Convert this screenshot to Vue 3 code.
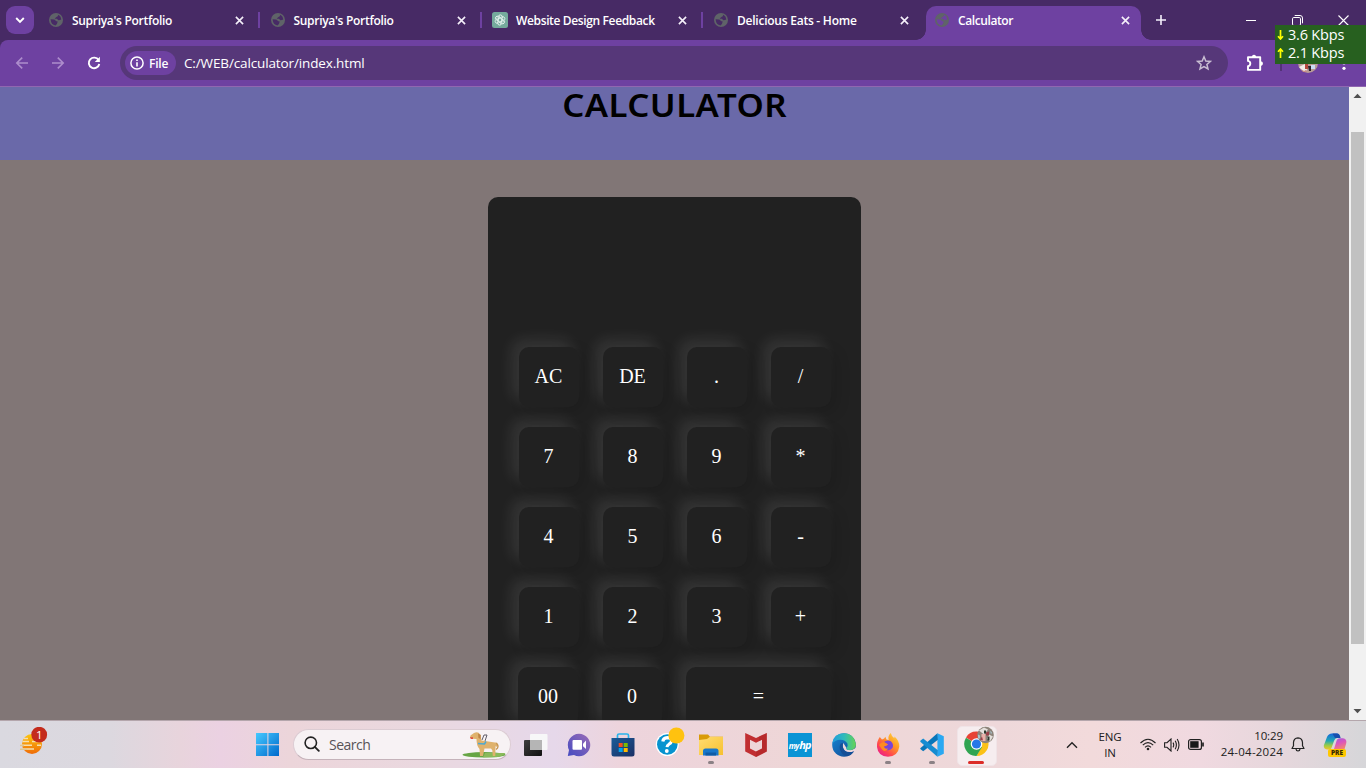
<script setup>
const tabs = [
  { title: "Supriya's Portfolio", icon: 'globe', cls: 't-port' },
  { title: "Supriya's Portfolio", icon: 'globe', cls: 't-port' },
  { title: 'Website Design Feedback', icon: 'gpt', cls: 't-web' },
  { title: 'Delicious Eats - Home', icon: 'globe', cls: 't-eats' },
  { title: 'Calculator', icon: 'globe', cls: 't-calc', active: true },
]
const rows = [
  ['AC', 'DE', '.', '/'],
  ['7', '8', '9', '*'],
  ['4', '5', '6', '-'],
  ['1', '2', '3', '+'],
]
</script>

<template>
  <div class="screen">
    <div class="tabstrip">
      <div class="tabsearch">
        <svg width="10" height="8" viewBox="0 0 10 8"><path d="M1.2 2 L5 5.8 L8.8 2" fill="none" stroke="#fff" stroke-width="1.9" /></svg>
      </div>
      <div class="tabs">
        <div v-for="(t, i) in tabs" :key="i" class="tab" :class="{ active: t.active, sep: i < 3 }">
          <svg v-if="t.icon === 'globe'" class="fav" width="14" height="14" viewBox="0 0 14 14">
            <circle cx="7" cy="7" r="7" fill="#5f6368" />
            <path d="M1.6 6.3 L5 6.4 Q6.8 6.7 6.6 8.1 L8.7 8.4 Q8.4 10.8 6.5 12.4 Q2.1 12 1.6 6.3Z" :fill="t.active ? '#6e41a1' : '#472a65'" />
            <path d="M7.7 1.7 L9.3 2.1 Q9.2 3.8 7.4 3.9 Q6.8 5 5.7 4.9 Q6.2 6 8 5.8 L9.3 7.3 Q10.7 7.5 12.3 6.5 Q12 3.3 9.8 2.1Z" :fill="t.active ? '#6e41a1' : '#472a65'" />
          </svg>
          <svg v-else class="fav gpt" width="16" height="16" viewBox="0 0 16 16">
            <rect width="16" height="16" rx="2.5" fill="#74aa9c" />
            <g fill="none" stroke="#f3faf8" stroke-width=".8">
              <path v-for="k in 6" :key="k" :transform="`rotate(${k * 60} 8 8)`" d="M8 5.9 L10 4.8 Q12.2 4.2 12.8 6.2 Q13.1 7.4 12.1 8.3 M9.8 7 L7.3 5.5 V4" />
            </g>
          </svg>
          <span class="title" :class="t.cls">{{ t.title }}</span>
          <svg class="x" width="9" height="9" viewBox="0 0 9 9"><path d="M.9 .9 L8.1 8.1 M8.1 .9 L.9 8.1" stroke="#f5f0fa" stroke-width="1.6" /></svg>
        </div>
      </div>
      <svg class="plus" width="12" height="12" viewBox="0 0 12 12"><path d="M6 1 V11 M1 6 H11" stroke="#f4effa" stroke-width="1.6" /></svg>
      <div class="winctl">
        <svg width="10" height="10" viewBox="0 0 10 10"><path d="M0 5.5 H10" stroke="#fff" /></svg>
        <svg width="11" height="11" viewBox="0 0 11 11"><g fill="none" stroke="#fff"><rect x=".5" y="2.5" width="8" height="8" rx="1.3" /><path d="M2.7 .5 H8 Q10.5 .5 10.5 3 V8.3" /></g></svg>
        <svg width="11" height="11" viewBox="0 0 11 11"><path d="M.5 .5 L10.5 10.5 M10.5 .5 L.5 10.5" stroke="#fff" stroke-width="1.1" /></svg>
      </div>
    </div>

    <div class="barwrap">
      <div class="toolbar">
        <svg class="back" width="14" height="14" viewBox="0 0 14 14"><path d="M13 7 H2 M7.2 1.6 L1.8 7 L7.2 12.4" fill="none" stroke="#ad8dcc" stroke-width="1.6" /></svg>
        <svg class="fwd" width="14" height="14" viewBox="0 0 14 14"><path d="M1 7 H12 M6.8 1.6 L12.2 7 L6.8 12.4" fill="none" stroke="#ad8dcc" stroke-width="1.6" /></svg>
        <svg class="reload" width="14" height="14" viewBox="0 0 14 14"><path d="M11.6 4.1 A5.3 5.3 0 1 0 12.3 8" fill="none" stroke="#fff" stroke-width="1.9" /><path d="M12.9 .8 V6 H7.8 Z" fill="#fff" /></svg>
        <div class="omni">
          <div class="chip">
            <svg width="14" height="14" viewBox="0 0 14 14"><circle cx="7" cy="7" r="6.1" fill="none" stroke="#fff" stroke-width="1.5" /><path d="M7 6.2 V10.4 M7 3.5 V5" stroke="#fff" stroke-width="1.6" /></svg>
            <span>File</span>
          </div>
          <span class="url">C:/WEB/calculator/index.html</span>
          <svg class="star" width="16" height="16" viewBox="0 0 16 16"><path d="M8 1.8 L9.8 6 L14.4 6.4 L10.9 9.4 L12 13.9 L8 11.5 L4 13.9 L5.1 9.4 L1.6 6.4 L6.2 6 Z" fill="none" stroke="#c8bdd2" stroke-width="1.5" /></svg>
        </div>
        <svg class="puzzle" width="18" height="18" viewBox="0 0 18 18"><path d="M2 3.2 H14.2 V15.9 H2 V12.3 Q4.3 11.8 4.3 9.6 Q4.3 7.3 2 6.9 Z" fill="none" stroke="#fff" stroke-width="1.9" stroke-linejoin="round" /><path d="M5.8 3.4 Q5.8 .7 8 .7 Q10.2 .7 10.2 3.4Z M14 7.2 Q16.9 7.2 16.9 9.5 Q16.9 11.8 14 11.8Z" fill="#fff" /></svg>
        <div class="tsep"></div>
        <svg class="avatar" width="20" height="20" viewBox="0 0 20 20">
          <circle cx="10" cy="10" r="10" fill="#b99b97" />
          <path d="M1 14 L7 11 L9 17 L6 19 Z" fill="#f1ece8" /><path d="M7 11 h3 v5 h-3z" fill="#b4483d" /><path d="M10 13 h3 v5 h-2z" fill="#29222c" /><path d="M13 12 h4 v4 h-4z" fill="#cbdaf5" /><path d="M3 16 l3 2 2 -1 1 2 -4 0z" fill="#c98f86" />
        </svg>
        <svg class="dots" width="4" height="18" viewBox="0 0 4 18"><g fill="#fff"><circle cx="2" cy="4" r="1.6" /><circle cx="2" cy="9" r="1.6" /><circle cx="2" cy="14.3" r="1.6" /></g></svg>
      </div>
    </div>

    <div class="viewport">
      <div class="page">
        <header><h1>CALCULATOR</h1></header>
        <main>
          <div class="calc">
            <div v-for="(r, i) in rows" :key="i" class="row">
              <div v-for="b in r" :key="b" class="key">{{ b }}</div>
            </div>
            <div class="row last">
              <div class="key">00</div>
              <div class="key">0</div>
              <div class="key wide">=</div>
            </div>
          </div>
        </main>
      </div>
      <div class="scroll">
        <svg width="17" height="17" viewBox="0 0 17 17"><path d="M4.5 11 L8.5 6.7 L12.5 11 Z" fill="#505050" /></svg>
        <div class="thumb"></div>
        <svg width="17" height="17" viewBox="0 0 17 17"><path d="M4.5 6 L8.5 10.3 L12.5 6 Z" fill="#505050" /></svg>
      </div>
    </div>

    <div class="taskbar">
      <div class="widget">
        <svg width="29" height="29" viewBox="0 0 29 29">
          <defs><linearGradient id="sun" x1="0" y1="0" x2="0" y2="1"><stop offset="0" stop-color="#fcc60d" /><stop offset="1" stop-color="#ef6b08" /></linearGradient></defs>
          <circle cx="12" cy="17" r="10" fill="url(#sun)" />
          <g stroke="#f5dfb0" stroke-width="1.4"><path d="M4 11.5 H8 M2.5 14.5 H9 M12 14.5 H20 M0 18.2 H12 M17 18.2 H21 M2 22 H14" /></g>
          <g stroke="#dfc693" stroke-width="1.5"><path d="M0 18.5 H4 M0 22.2 H7" /></g>
          <circle cx="19.2" cy="7.7" r="7.9" fill="#c42b1c" />
        </svg>
        <span class="badge">1</span>
      </div>

      <svg class="win" width="24" height="24" viewBox="0 0 24 24">
        <defs><linearGradient id="wg" x1="0" y1="0" x2="1" y2="1"><stop offset="0" stop-color="#45c9ff" /><stop offset="1" stop-color="#0069cc" /></linearGradient></defs>
        <path d="M0 0 H11.4 V11.2 H0Z M12.4 0 H23 V11.2 H12.4Z M0 12.2 H11.4 V23 H0Z M12.4 12.2 H23 V23 H12.4Z" fill="url(#wg)" />
      </svg>

      <div class="search">
        <svg width="16" height="16" viewBox="0 0 16 16"><circle cx="6.8" cy="6.8" r="5.7" fill="none" stroke="#222" stroke-width="1.6" /><path d="M10.8 10.8 L14.8 14.8" stroke="#222" stroke-width="1.9" stroke-linecap="round" /></svg>
        <span>Search</span>
        <svg class="dog" width="46" height="28" viewBox="0 0 46 28">
          <ellipse cx="23" cy="24.8" rx="21.5" ry="2.7" fill="#67a545" /><path d="M24 23 H44.5 Q42 26.5 35 27.3 H22Z" fill="#8aba5b" />
          <path d="M9.5 5.5 L13 3 Q17 1 19.2 4.5 L20.5 10.5 L34 12.6 Q36.7 11.4 36.4 17 L34.5 16.3 L34.3 26 H31.8 L31.3 20.3 L30 18.5 L23.5 18.4 L22 26 H19 L18.5 19 Q15.5 16 15.5 9 L11.5 8.7 L9 7.8Z" fill="#dfb26d" />
          <path d="M17 3.5 L19.8 5 L19.5 9 L17.5 8Z" fill="#bd8444" /><path d="M9 7.3 H12 V9 H9.8Z" fill="#df4e3e" /><path d="M35.4 13 Q38.8 17 35 19.5" fill="none" stroke="#c79651" stroke-width="1.3" />
          <path d="M17 13.5 L23.5 14 L25 11.5" fill="none" stroke="#4ba9d3" stroke-width="1.5" /><path d="M21 10 L23 5 H26 L24 11" fill="none" stroke="#5f5d68" />
        </svg>
      </div>

      <div class="apps">
        <div class="app">
          <svg width="26" height="24" viewBox="0 0 26 24"><defs><linearGradient id="tv" x1="0" y1="0" x2="1" y2="1"><stop offset="0" stop-color="#3e3e3e" /><stop offset="1" stop-color="#111" /></linearGradient></defs><rect x="8" y="1" width="17.5" height="16" rx="1" fill="#f7f7f8" /><rect x="2" y="7" width="18" height="16" rx="1" fill="url(#tv)" /><path d="M8 7 H20 V17 H8Z" fill="#b5b5b5" /></svg>
        </div>
        <div class="app">
          <svg width="24" height="24" viewBox="0 0 24 24"><defs><linearGradient id="ch" x1="0" y1="1" x2="1" y2="0"><stop offset="0" stop-color="#444bc1" /><stop offset="1" stop-color="#9b6db7" /></linearGradient></defs><path d="M12 .8 A11.2 11.2 0 1 1 7 22 L.8 23 L2 17 A11.2 11.2 0 0 1 12 .8Z" fill="url(#ch)" /><rect x="5.5" y="7" width="9.5" height="9.7" rx="1" fill="#fff" /><path d="M16 10.7 L19 7.5 V16 L16 13.3Z" fill="#fff" /></svg>
        </div>
        <div class="app">
          <svg width="24" height="24" viewBox="0 0 24 24"><defs><linearGradient id="st" x1="0" y1="0" x2="1" y2="1"><stop offset="0" stop-color="#195c99" /><stop offset="1" stop-color="#1b2f64" /></linearGradient></defs><path d="M6.5 6 V2.5 Q6.5 1 8 1 H16 Q17.5 1 17.5 2.5 V6" fill="none" stroke="#29b4ec" stroke-width="1.7" /><path d="M.5 5 H23.5 V21 Q23.5 23.5 21 23.5 H3 Q.5 23.5 .5 21Z" fill="url(#st)" /><path d="M7.7 10 h4 v4 h-4z" fill="#f25022" /><path d="M12.7 10 h4 v4 h-4z" fill="#7fba00" /><path d="M7.7 15 h4 v4 h-4z" fill="#00a4ef" /><path d="M12.7 15 h4 v4 h-4z" fill="#ffb900" /></svg>
        </div>
        <div class="app">
          <svg class="help" width="30" height="30" viewBox="0 0 30 30"><circle cx="12.3" cy="17.5" r="11.5" fill="#fff" /><circle cx="12.3" cy="17.5" r="10.3" fill="#0793cf" /><path d="M7.8 14.5 Q8.2 10.8 12.2 10.6 Q16.8 10.7 16.4 14.2 Q16.2 16 14 17.2 Q12.2 18.3 12 20.2" fill="none" stroke="#fff" stroke-width="3.1" /><circle cx="11.8" cy="24" r="1.9" fill="#fff" /><circle cx="21.4" cy="8.5" r="8" fill="#ffc20f" /></svg>
        </div>
        <div class="app">
          <svg width="24" height="24" viewBox="0 0 24 24"><defs><linearGradient id="fo" x1="0" y1="0" x2="1" y2="1"><stop offset="0" stop-color="#ffdc72" /><stop offset="1" stop-color="#f7c130" /></linearGradient></defs><path d="M0 1.5 H9 L11 3.8 H24 V7 H0Z" fill="#d99b08" /><path d="M0 7 L8 6 L11 3.8 H24 V22 H0Z" fill="url(#fo)" /><path d="M4 22.5 V18 Q4 15.5 6.5 15.5 H17 Q19.5 15.5 19.5 18 V22.5Z" fill="#1877c9" /><path d="M6.5 19.5 H17 V22.5 H6.5Z" fill="#0e5ca6" /></svg>
          <i class="run"></i>
        </div>
        <div class="app">
          <svg width="24" height="24" viewBox="0 0 24 24"><path d="M1.2 0 L12 5 L22.8 0 V18.5 L12 24 L1.2 18.5Z M6 6.7 V15.5 L12 18.5 L18 15.5 V6.7 L12 9.7Z" fill="#c12e31" fill-rule="evenodd" /><path d="M22.8 0 V18.5 L12 24 V18.5 L18 15.5 V6.7 L15 8 V3.6Z" fill="#aa2529" opacity=".45" /></svg>
        </div>
        <div class="app"><div class="hp"><small>my</small>hp</div></div>
        <div class="app">
          <svg width="24" height="24" viewBox="0 0 24 24"><defs><linearGradient id="e1" x1="0" y1="0" x2="1" y2="0"><stop offset="0" stop-color="#229bdd" /><stop offset=".5" stop-color="#2fbbba" /><stop offset="1" stop-color="#66d352" /></linearGradient><linearGradient id="e2" x1="0" y1="0" x2="1" y2="1"><stop offset="0" stop-color="#1587d6" /><stop offset="1" stop-color="#15468e" /></linearGradient></defs>
            <circle cx="12" cy="12" r="11.8" fill="url(#e2)" />
            <path d="M14.5 15 Q13.8 17.3 18.8 17.1 Q21 17 22.6 15.6 L24 15 V18 L21.8 18.4 Q15.9 20.2 12.7 17.4 Q9.5 13.5 11.3 10Z" fill="#edd7dc" />
            <path d="M.4 10.3 Q1.5 .3 12 .2 Q22.3 .5 23.9 11 Q24 16.5 18.3 17.2 Q14 17.2 14.4 15 Q16.3 13 15.4 10.5 Q13.2 6.5 8 6.7 Q3.2 7 .4 10.3Z" fill="url(#e1)" />
            <path d="M8.8 10.5 Q6.8 13.5 8.3 17.5 Q10.5 22.5 15.5 23.3 Q19.5 22.3 22 18.6 Q16 20.6 12.5 17.4 Q9.8 14.5 11.2 10Z" fill="#154f97" /></svg>
        </div>
        <div class="app">
          <svg width="24" height="24" viewBox="0 0 24 24"><defs><linearGradient id="ff" x1="1" y1="0" x2=".2" y2="1"><stop offset="0" stop-color="#ffe34a" /><stop offset=".42" stop-color="#ff9a22" /><stop offset=".75" stop-color="#ff4550" /><stop offset="1" stop-color="#e81d8d" /></linearGradient></defs><path d="M3.8 4 L6 6.4 L8.2 5.5 L9.3 3.8 L10.5 6.5 L12.7 7 Q11.5 3 14.8 0 Q15.4 3.3 18.3 5.2 L18.5 3.5 Q23.5 8 23.3 13.5 Q22 23.5 12 23.8 Q2 23.3 1 14 Q.5 8.5 3.8 4Z" fill="url(#ff)" /><path d="M8 9 Q11 6.2 14.8 8.3 Q18 11 16.6 14.8 Q14 18.3 10 16.7 L7.4 13.5 L12.2 11.5Z" fill="#7845d8" /><path d="M3 12 Q5 8.5 8.6 9.4 L12 11.5 Q9.7 13.5 7.8 13.4 Q8.5 16.2 12.3 15.5 Q9 20 5.7 16Z" fill="#ff8b20" /></svg>
          <i class="run"></i>
        </div>
        <div class="app">
          <svg width="24" height="24" viewBox="0 0 24 24"><path d="M17.4 .3 L23.8 3.3 V20.7 L17.4 23.7Z" fill="#2aa8f2" /><path d="M17.4 .3 L17.9 6.8 L3.2 18.3 L.3 16.1 V15.3Z" fill="#0876ba" /><path d="M3.2 5.5 L17.9 17.2 L17.4 23.7 L.3 8.7 V7.8Z" fill="#168cd1" /></svg>
          <i class="run"></i>
        </div>
        <div class="app current">
          <svg class="chrome" width="30" height="30" viewBox="0 0 30 30">
            <path d="M12.5 18 L2 11.5 A12 12 0 0 1 23.2 12.5 H12.5Z" fill="#e84335" /><path d="M12.5 18 L23.2 12.5 A12 12 0 0 1 12.5 30 L18 20Z" fill="#fbc116" /><path d="M12.5 18 L18 21 L12.5 30 A12 12 0 0 1 2 11.8Z" fill="#30a451" /><circle cx="12.5" cy="18" r="5.8" fill="#fff" /><circle cx="12.5" cy="18" r="4.6" fill="#2678e8" />
            <circle cx="21.5" cy="9" r="8.3" fill="#8d8379" /><path d="M15 4.5 l5 -3 4 2 -4 5z M25 8.5 l4 2 -3 5 -3 -3z" fill="#e4dfdb" /><path d="M17.5 8 h4 v7 h-4z" fill="#eab2aa" /><path d="M22 6.5 l3 -1 v4 h-3z M16 13.5 l2 -3 1 4z" fill="#9a3f48" /><path d="M20 4.5 h2 v3 h-2z M23.5 10.5 h2 v4 h-2z" fill="#2e392e" /><path d="M14 8.5 l2 1 v3 h-2z M26 4.5 l2 2 -1 2z" fill="#a8c2cb" />
          </svg>
          <i class="run red"></i>
        </div>
      </div>

      <div class="tray">
        <svg class="chev" width="12" height="8" viewBox="0 0 12 8"><path d="M1 6.8 L6 1.8 L11 6.8" fill="none" stroke="#222" stroke-width="1.4" /></svg>
        <div class="lang"><span>ENG</span><span>IN</span></div>
        <svg class="wifi" width="16" height="13" viewBox="0 0 16 13"><g fill="none" stroke="#202020" stroke-width="1.1"><path d="M.5 5 Q8 -2.6 15.5 5" /><path d="M2.8 7.2 Q8 2 13.2 7.2" /><path d="M5 9.4 Q8 6.4 11 9.4" /></g><circle cx="8" cy="11" r="1.3" fill="#202020" /></svg>
        <svg class="vol" width="16" height="14" viewBox="0 0 16 14"><g fill="none" stroke="#202020" stroke-width="1.1"><path d="M.6 4.7 H3 L7 1 V13 L3 9.3 H.6Z" /><path d="M9 4.6 Q10.5 7 9 9.4 M11.2 2.8 Q13.6 7 11.2 11.2 M13.2 1 Q16.8 7 13.2 13" /></g></svg>
        <svg class="bat" width="16" height="11" viewBox="0 0 16 11"><rect x=".6" y=".6" width="12.8" height="9.8" rx="2" fill="none" stroke="#202020" stroke-width="1.2" /><rect x="2.2" y="2.2" width="8.4" height="6.6" fill="#181818" /><path d="M15 3.5 V7.5" stroke="#202020" stroke-width="1.7" /></svg>
        <div class="clock"><span>10:29</span><span class="date">24-04-2024</span></div>
        <svg class="bell" width="14" height="15" viewBox="0 0 14 15"><path d="M1 11.5 L2.5 8.8 V5.5 Q2.8 1 7 .8 Q11.2 1 11.5 5.5 V8.8 L13 11.5Z M5 12 Q5.2 14 7 14 Q8.8 14 9 12" fill="none" stroke="#222" stroke-width="1.2" stroke-linejoin="round" /></svg>
        <div class="copilot">
          <svg width="24" height="24" viewBox="0 0 24 24"><defs><linearGradient id="c1" x1="0" y1="0" x2="0" y2="1"><stop offset="0" stop-color="#1769d9" /><stop offset=".45" stop-color="#20a7b5" /><stop offset=".75" stop-color="#9bcb45" /><stop offset="1" stop-color="#f0c629" /></linearGradient><linearGradient id="c2" x1="0" y1="0" x2=".4" y2="1"><stop offset="0" stop-color="#9361e4" /><stop offset=".5" stop-color="#db55bd" /><stop offset="1" stop-color="#f68a69" /></linearGradient></defs><path d="M9 .6 H14 Q16.5 .6 17.2 5 H14 Q12 5 11 8 L8.5 15 Q8 16.5 4 16.5 Q.5 16 .8 12.5 L4 4 Q5.5 .7 9 .6Z" fill="url(#c1)" /><path d="M14 .6 Q16.6 .6 17.6 5 H12 L9.5 .6Z" fill="#174fae" /><path d="M17 5.2 H20 Q24 5.8 23.3 10 L21 18 H9.5 L11 16 L13.5 8 Q14.3 5.2 17 5.2Z" fill="url(#c2)" /></svg>
          <span>PRE</span>
        </div>
      </div>
    </div>

    <div class="net">
      <div><svg width="7" height="10" viewBox="0 0 7 10"><path d="M3.5 0 V8 M1 6.2 L3.5 9 L6 6.2" fill="none" stroke="#ff0" stroke-width="1.7" /></svg><span>3.6 Kbps</span></div>
      <div><svg width="7" height="10" viewBox="0 0 7 10"><path d="M3.5 10 V2 M1 3.8 L3.5 1 L6 3.8" fill="none" stroke="#ff0" stroke-width="1.7" /></svg><span>2.1 Kbps</span></div>
    </div>
  </div>
</template>

<style>
body { margin: 0; overflow: hidden; }
</style>

<style scoped>
* { box-sizing: border-box; }
svg { display: block; flex: none; }
.screen { position: relative; width: 1366px; height: 768px; overflow: hidden; display: flex; flex-direction: column; font-family: "Open Sans", "Noto Sans", sans-serif; background: #472a65; }
.tabstrip { height: 40px; display: flex; background: #472a65; flex: none; }
.tabsearch { width: 28px; height: 28px; margin: 6px 6px 0; border-radius: 9px; background: #6e41a1; display: flex; align-items: center; justify-content: center; }
.tabs { display: flex; }
.tab { width: 221.5px; height: 40px; padding-left: 9px; display: flex; align-items: center; position: relative; color: #fff; }
.tab.active { width: 215px; height: 34px; margin-top: 6px; border-radius: 10px 10px 0 0; background: #6e41a1; padding-bottom: 6px; }
.tab.active::before, .tab.active::after { content: ""; position: absolute; bottom: 0; width: 10px; height: 10px; }
.tab.active::before { left: -10px; background: radial-gradient(circle at 0 0, transparent 9.5px, #6e41a1 10px); }
.tab.active::after { right: -10px; background: radial-gradient(circle at 100% 0, transparent 9.5px, #6e41a1 10px); }
.tab.sep::after { content: ""; position: absolute; left: 218px; top: 12px; width: 2px; height: 16px; background: #6e41a1; }
.fav { margin-right: 9px; }
.fav.gpt { margin-right: 8px; }
.title { font-size: 12px; font-weight: 600; line-height: 16px; white-space: nowrap; width: 163.4px; margin-top: 1px; }
.gpt + .title { width: 162.4px; }
.t-port { letter-spacing: -0.3px; }
.t-web { letter-spacing: -0.36px; }
.t-eats { letter-spacing: -0.24px; padding-left: 0.5px; }
.t-calc { letter-spacing: -0.4px; }
.plus { margin: 14px 0 0 14px; }
.winctl { margin: 15px 0 0 79px; display: flex; gap: 35.5px; }

.barwrap { height: 47px; flex: none; background: #472a65; }
.toolbar { height: 47px; display: flex; align-items: center; background: #6e41a1; border-radius: 8px 0 0 0; border-bottom: 1px solid #9067b0; }
.back { margin-left: 15px; }
.fwd { margin-left: 22px; }
.reload { margin-left: 22px; }
.omni { width: 1108px; height: 34px; margin-left: 19px; border-radius: 17px; background: #563779; display: flex; align-items: center; padding-left: 5px; }
.chip { width: 51px; height: 24px; border-radius: 12px; background: #6e41a1; display: flex; align-items: center; padding-left: 5px; gap: 5px; color: #fff; font-size: 12px; font-weight: 600; letter-spacing: -0.2px; }
.url { margin-left: 8px; color: #fff; font-size: 13.5px; letter-spacing: -0.13px; width: 1012px; white-space: nowrap; }
.puzzle { margin-left: 18px; }
.tsep { width: 2px; height: 16px; margin-left: 16px; background: #533278; }
.avatar { margin-left: 16px; }
.dots { margin-left: 24px; }

.viewport { height: 633px; flex: none; display: flex; }
.page { width: 1349px; background: #817676; }
header { height: 73px; background: #6a69a9; display: flex; justify-content: center; }
h1 { margin: 0; height: 36px; font-family: "Noto Sans", sans-serif; font-size: 32px; line-height: 36px; font-weight: 600; letter-spacing: 0.4px; transform: scaleX(1.085); color: #000; }
main { height: 560px; overflow: hidden; display: flex; justify-content: center; padding-top: 37px; }
.calc { width: 373px; height: 560px; background: #212121; border-radius: 10px; padding: 150px 0 0 31px; display: flex; flex-direction: column; gap: 20px; flex: none; }
.row { display: flex; gap: 24px; }
.row.last { margin-left: -1px; }
.key { width: 60px; height: 60px; border-radius: 10px; background: #212121; box-shadow: -7px -7px 15px rgba(255, 255, 255, 0.1), 5px 5px 15px rgba(0, 0, 0, 0.14); color: #fff; font: 20px/59px "Liberation Serif", serif; text-align: center; padding-right: 1px; }
.last .key { padding-right: 0; }
.key.wide { width: 145px; }
.scroll { width: 17px; background: #f1f1f1; display: flex; flex-direction: column; }
.thumb { width: 13px; height: 512px; margin: 28px 2px 59px; background: #c1c1c1; }

.taskbar { height: 48px; flex: none; display: flex; align-items: center; border-top: 1px solid #b4a6ac; background: linear-gradient(90deg, #dad9e0 0, #dcd8df 110px, #e8d4dc 180px, #ebd1e2 220px, #ecd5da 290px, #ead8df 420px, #e6d8ea 555px, #edd4dc 620px, #eed6d7 800px, #eed8da 1000px, #f2dadb 1090px, #f0d9e0 1200px, #e6d7dc 1280px, #d6d6d9 1366px); }
.widget { position: relative; margin-left: 20px; width: 29px; height: 35px; margin-top: -1px; }
.badge { position: absolute; left: 16px; top: 0; font-size: 11.5px; line-height: 15px; color: #fff; }
.win { margin-left: 207px; }
.search { width: 218px; height: 31px; margin-left: 13px; margin-top: -1px; border-radius: 16px; background: #f7f2f4; border: 1px solid #dcccd3; border-bottom-color: #c5b3ba; display: flex; align-items: center; padding-left: 10px; flex: none; }
.search span { margin-left: 9px; width: 132px; font-size: 14px; letter-spacing: -0.5px; color: #575357; flex: none; }
.apps { display: flex; margin-left: 2px; }
.app { width: 44.1px; height: 40px; position: relative; display: flex; align-items: center; justify-content: center; }
.help { margin: -5px 0 0 5px; }
.chrome { margin: -7px 0 0 6px; }
.current::before { content: ""; position: absolute; left: 3px; top: 1px; width: 38px; height: 38px; border-radius: 5px; background: #f6edef; border: 1px solid #f0e4e7; }
.current svg { position: relative; }
.run { position: absolute; left: 19px; bottom: 1px; width: 6px; height: 3px; border-radius: 2px; background: #8b8185; }
.run.red { left: 14px; width: 16px; background: #dc2c27; }
.hp { width: 24px; height: 24px; background: #0a94d5; color: #fff; font-size: 11px; font-style: italic; font-weight: 700; line-height: 23px; text-align: center; letter-spacing: -0.9px; white-space: nowrap; }
.hp small { font-size: 8px; letter-spacing: -0.7px; margin-right: 0.5px; }
.tray { display: flex; align-items: center; color: #202020; margin-left: auto; width: 300px; font-size: 11.5px; line-height: 16px; flex: none; }
.chev { margin-left: 0; }
.lang { width: 36px; margin-left: 14px; text-align: center; display: flex; flex-direction: column; letter-spacing: -0.15px; }
.wifi { margin-left: 12px; }
.vol { margin-left: 8px; }
.bat { margin-left: 8px; }
.clock { width: 66px; margin-left: 13px; margin-top: -1px; text-align: right; display: flex; flex-direction: column; letter-spacing: -0.1px; white-space: nowrap; align-items: flex-end; }
.date { letter-spacing: 0.22px; }
.bell { margin-left: 8px; }
.copilot { position: relative; margin-left: 18px; height: 24px; width: 24px; }
.copilot span { position: absolute; left: 5px; top: 16px; width: 18px; height: 8px; border-radius: 2px; background: #ffc800; font-size: 6.5px; line-height: 8px; font-weight: 800; text-align: center; color: #3b2c00; }

.net { position: absolute; left: 1275px; top: 25px; width: 91px; height: 39px; padding-top: 1px; background: #27601f; color: #fff; font-size: 14.5px; line-height: 18px; }
.net div { display: flex; align-items: center; gap: 4px; padding-left: 2px; height: 18px; }
.net span { letter-spacing: -0.2px; white-space: nowrap; }
</style>
